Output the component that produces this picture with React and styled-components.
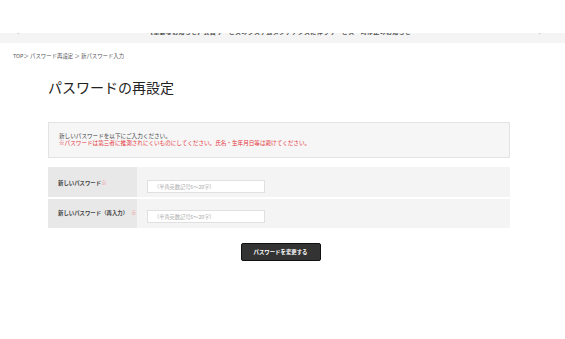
import styled, { createGlobalStyle } from "styled-components";

/* Global */

const GlobalStyle = createGlobalStyle`
    html, body {
        margin: 0;
        padding: 0;
        background: #fff;
        font-family: "Noto Sans CJK JP", "Noto Sans", sans-serif;
        color: #333;
    }
`

/* Header */

const Header = styled.header`
    height: 33px;
    background: #fff;
`

const NoticeBar = styled.div`
    height: 10px;
    background: #f4f4f4;
    display: flex;
    align-items: flex-start;
    justify-content: space-between;
    padding: 0 24px 0 17px;
    overflow: hidden;
`

const Chevron = styled.span`
    font-size: 8px;
    line-height: 8px;
    color: #999;
    margin-top: -5px;
`

const NoticeText = styled.span`
    font-size: 6px;
    line-height: 6px;
    font-weight: 700;
    color: #555;
    margin-top: -4px;
    white-space: nowrap;
    letter-spacing: 0.3px;
`

/* Breadcrumb */

const Breadcrumb = styled.nav`
    padding: 9px 13px 0;
    font-size: 5.4px;
    line-height: 8px;
    color: #555;
`

/* Main */

const Main = styled.main`
    width: 462px;
    margin: 0 0 0 48px;
`

const Title = styled.h1`
    margin: 17px 0 0;
    font-size: 14px;
    line-height: 20px;
    font-weight: 400;
    color: #222;
`

const InfoBox = styled.div`
    margin-top: 25px;
    height: 36px;
    box-sizing: border-box;
    background: #f6f6f6;
    border: 1px solid #e3e3e3;
    padding: 10px 10px 0;
    font-size: 5.6px;
    line-height: 6.5px;
`

const InfoLine = styled.p`
    margin: 0;
    color: ${props => props.warn ? "#e5343b" : "#444"};
`

const Form = styled.form`
    margin-top: 9px;
    display: flex;
    flex-direction: column;
    gap: 2px;
`

const Row = styled.div`
    display: grid;
    grid-template-columns: 89px 1fr;
    height: ${props => props.h}px;
    background: #f4f4f4;
`

const Label = styled.div`
    background: #e8e8e8;
    padding: ${props => props.top}px 0 0 10px;
    font-size: 5.4px;
    line-height: 8px;
    font-weight: 700;
    color: #444;
    white-space: nowrap;
`

const Required = styled.span`
    color: #ef8a8a;
    margin-left: ${props => props.gap || 0}px;
`

const Cell = styled.div`
    padding: ${props => props.top}px 0 0 10px;
`

const Input = styled.input`
    display: block;
    width: 118px;
    height: 13px;
    box-sizing: border-box;
    border: 1px solid #e0e0e0;
    background: #fff;
    padding: 0 6px;
    font-family: inherit;
    font-size: 5.2px;
    outline: none;

    &::placeholder {
        color: #aaa;
    }
`

const Actions = styled.div`
    display: flex;
    justify-content: center;
    margin-top: 15px;
    padding-left: 3px;
`

const Button = styled.button`
    width: 80px;
    height: 18px;
    background: #333;
    border: 1px solid #111;
    border-radius: 2px;
    color: #fff;
    font-family: inherit;
    font-size: 5.4px;
    font-weight: 700;
    cursor: pointer;
`

const App = () => {
    return (
        <>
            <GlobalStyle />
            <Header />
            <NoticeBar>
                <Chevron>‹</Chevron>
                <NoticeText>【重要なお知らせ】会員サービスのシステムメンテナンスに伴うサービス一時停止のお知らせ</NoticeText>
                <Chevron>›</Chevron>
            </NoticeBar>
            <Breadcrumb>TOP＞ パスワード再設定 ＞ 新パスワード入力</Breadcrumb>
            <Main>
                <Title>パスワードの再設定</Title>
                <InfoBox>
                    <InfoLine>新しいパスワードを以下にご入力ください。</InfoLine>
                    <InfoLine warn>※パスワードは第三者に推測されにくいものにしてください。氏名・生年月日等は避けてください。</InfoLine>
                </InfoBox>
                <Form onSubmit={e => e.preventDefault()}>
                    <Row h={30}>
                        <Label top={12}>新しいパスワード<Required>※</Required></Label>
                        <Cell top={13}>
                            <Input type="password" placeholder="（半角英数記号6～20字）" />
                        </Cell>
                    </Row>
                    <Row h={29}>
                        <Label top={10}>新しいパスワード（再入力）<Required gap={3}>※</Required></Label>
                        <Cell top={11}>
                            <Input type="password" placeholder="（半角英数記号6～20字）" />
                        </Cell>
                    </Row>
                </Form>
                <Actions>
                    <Button type="button">パスワードを変更する</Button>
                </Actions>
            </Main>
        </>
    )
}

export default App;
